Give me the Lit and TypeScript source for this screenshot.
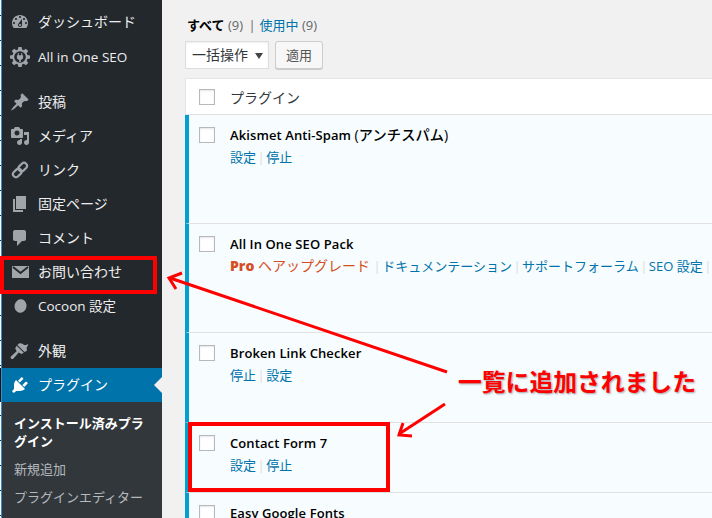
import { LitElement, html, css, svg } from "lit";
import { customElement } from "lit/decorators.js";

const ICONS: Record<string, unknown> = {
  dash: svg`<path d="M3.76 16h12.48c1.1-1.37 1.76-3.11 1.76-5 0-4.42-3.58-8-8-8s-8 3.58-8 8c0 1.89.66 3.63 1.76 5zM10 4c.55 0 1 .45 1 1s-.45 1-1 1-1-.45-1-1 .45-1 1-1zM6 6c.55 0 1 .45 1 1s-.45 1-1 1-1-.45-1-1 .45-1 1-1zm8 0c.55 0 1 .45 1 1s-.45 1-1 1-1-.45-1-1 .45-1 1-1zm-5.37 5.55L12 7v6c0 1.1-.9 2-2 2s-2-.9-2-2c0-.57.24-1.08.63-1.45zM4 10c.55 0 1 .45 1 1s-.45 1-1 1-1-.45-1-1 .45-1 1-1zm12 0c.55 0 1 .45 1 1s-.45 1-1 1-1-.45-1-1 .45-1 1-1zm-5 3c0-.55-.45-1-1-1s-1 .45-1 1 .45 1 1 1 1-.45 1-1z"/>`,
  seo: svg`<path d="M8.4 0h3.2l.5 2.6 1.6.7 2.2-1.500 2.300 2.300-1.500 2.200.7 1.600 2.600.5v3.200l-2.600.5-.7 1.600 1.500 2.200-2.300 2.300-2.200-1.500-1.600.7-.5 2.600H8.400l-.5-2.600-1.600-.7-2.200 1.500-2.300-2.300 1.500-2.200-.7-1.600L0 11.600V8.400l2.600-.5.7-1.600-1.500-2.200 2.300-2.300 2.200 1.500 1.600-.7z"/><circle cx="10" cy="10" r="5.800" fill="#23282d"/><path d="M7.800 6v2.200h-.9v2.300c0 1.300.9 2.200 2.300 2.400V15h1.600v-2.100c1.400-.2 2.300-1.100 2.300-2.400V8.200h-.9V6h-1v2.200H8.800V6z"/>`,
  pin: svg`<path d="M10.44 3.02l1.82-1.82 6.36 6.35-1.83 1.82c-1.05-.68-2.48-.57-3.41.36l-.75.75c-.92.93-1.04 2.35-.35 3.41l-1.83 1.82-2.41-2.41-2.8 2.79c-.42.42-3.38 2.71-3.8 2.29s1.86-3.39 2.28-3.81l2.79-2.79L4.1 9.36l1.83-1.82c1.05.69 2.48.57 3.4-.36l.75-.75c.93-.92 1.05-2.35.36-3.41z"/>`,
  media: svg`<path d="M13 11V4c0-.55-.45-1-1-1h-1.670L9 1H5L3.670 3H2c-.55 0-1 .45-1 1v7c0 .55.45 1 1 1h10c.55 0 1-.45 1-1zM7 4.500c1.380 0 2.500 1.120 2.500 2.500S8.380 9.500 7 9.500 4.500 8.380 4.500 7 5.620 4.500 7 4.500zM14 6h5v10.500c0 1.380-1.120 2.500-2.500 2.500S14 17.880 14 16.500s1.120-2.500 2.500-2.500c.170 0 .340.020.5.050V9h-3V6zm-4 8.050V13h2v3.500c0 1.380-1.120 2.500-2.500 2.500S7 17.880 7 16.500 8.120 14 9.500 14c.170 0 .340.020.5.050z"/>`,
  link: svg`<g fill="none" stroke="currentColor" stroke-width="2.200"><rect x="2.500" y="10" width="9.500" height="6" rx="3" transform="rotate(-45 7.200 13)"/><rect x="8" y="4" width="9.500" height="6" rx="3" transform="rotate(-45 12.800 7)"/></g>`,
  page: svg`<path d="M6 15V2h10v13H6zm-1 1h8v2H3V5h2v11z"/>`,
  comment: svg`<path d="M5 2h9c1.100 0 2 .9 2 2v7c0 1.100-.9 2-2 2h-2l-5 5v-5H5c-1.100 0-2-.9-2-2V4c0-1.100.9-2 2-2z"/>`,
  mail: svg`<rect x="2" y="4" width="17" height="12"/><path d="M3 5l7.500 6L18 5" fill="none" stroke="#23282d" stroke-width="1.800"/>`,
  circle: svg`<ellipse cx="10.500" cy="10" rx="6" ry="6.800" transform="rotate(12 10.500 10)"/>`,
  brush: svg`<path d="M14.480 11.060L7.410 3.990l1.500-1.500c.5-.56 2.300-.47 3.510.32 1.210.8 1.430 1.280 2.660 1.280 1.230 0 2.200-.4 2.600-.8.400-.4.700.2.400.8l-1.200 2.100c-.5.900-.2 1.700.1 2.300.3.600-.1 1-.5 1.400z"/><path d="M6.700 4.700l7.100 7.100-2.300 1.200-2.800-1.400L3.500 17.500c-1 .9-2 .6-2.500 0-.5-.6-.6-1.500.2-2.300l5.400-5-1.400-2.900z"/>`,
  plug: svg`<path d="M13.110 4.360L9.870 7.600 8 5.730l3.240-3.240c.35-.34 1.050-.2 1.560.32.520.51.660 1.210.310 1.550zm-8 1.770l.91-1.120 9.010 9.010-1.190.84c-.71.710-2.630 1.160-3.820 1.160H6.140L4.900 17.260c-.59.590-1.540.590-2.120 0-.59-.58-.59-1.530 0-2.120l1.240-1.240v-3.880c0-1.130.38-3.060 1.090-3.890zm7.260 3.970l3.240-3.240c.34-.35 1.040-.21 1.550.31.520.51.660 1.210.31 1.550l-3.240 3.250z"/>`,
};

type Menu = { icon: string; label: string; cls?: string };
const MENU: Menu[] = [
  { icon: "dash", label: "ダッシュボード", cls: "first" },
  { icon: "seo", label: "All in One SEO", cls: "tight small" },
  { icon: "pin", label: "投稿", cls: "sep" },
  { icon: "media", label: "メディア" },
  { icon: "link", label: "リンク" },
  { icon: "page", label: "固定ページ" },
  { icon: "comment", label: "コメント" },
  { icon: "mail", label: "お問い合わせ" },
  { icon: "circle", label: "Cocoon 設定", cls: "small" },
  { icon: "brush", label: "外観", cls: "sep" },
  { icon: "plug", label: "プラグイン", cls: "current" },
];

type Act = { t: string; pro?: boolean };
type Row = { name: string; ja?: string; h: number; acts: Act[]; trail?: boolean };
const ROWS: Row[] = [
  { name: "Akismet Anti-Spam ", ja: "(アンチスパム)", h: 109, acts: [{ t: "設定" }, { t: "停止" }] },
  {
    name: "All In One SEO Pack",
    h: 109,
    trail: true,
    acts: [{ t: "Pro ヘアップグレード", pro: true }, { t: "ドキュメンテーション" }, { t: "サポートフォーラム" }, { t: "SEO 設定" }],
  },
  { name: "Broken Link Checker", h: 90, acts: [{ t: "停止" }, { t: "設定" }] },
  { name: "Contact Form 7", h: 70, acts: [{ t: "設定" }, { t: "停止" }] },
  { name: "Easy Google Fonts", h: 60, acts: [] },
];

@customElement("app-root")
export class AppRoot extends LitElement {
  static styles = css`
    :host {
      display: flex;
      position: relative;
      width: 712px;
      height: 518px;
      overflow: hidden;
      background: #f1f1f1;
      font-family: "Open Sans", "Noto Sans CJK JP", sans-serif;
      font-size: 13px;
      color: #444;
    }
    .strip {
      width: 2px;
      flex: none;
      background:
        linear-gradient(90deg, #111 1px, transparent 1px) 0 368px / 2px 34px no-repeat,
        linear-gradient(90deg, #3a8ccb 0 2px) 1px 0 / 1px 100% no-repeat,
        repeating-linear-gradient(180deg, #fff 0 24px, #222 24px 25px) 0 -9px / 1px 600px no-repeat;
    }
    .side {
      width: 160px;
      flex: none;
      background: #23282d;
      color: #eee;
      padding-top: 5px;
      box-sizing: border-box;
    }
    .item {
      display: flex;
      align-items: center;
      height: 34px;
      position: relative;
      line-height: 18px;
      font-size: 14px;
      white-space: nowrap;
    }
    .item.tight { margin-top: 1px; }
    .item.small span { font-size: 13.500px; }
    .item.sep { margin-top: 11px; }
    .item svg {
      width: 20px;
      height: 20px;
      margin-left: 8px;
      margin-right: 8px;
      fill: #a0a5aa;
      color: #a0a5aa;
      flex: none;
    }
    .item.current { background: #0073aa; color: #fff; }
    .item.current svg { fill: #fff; }
    .item.current::after {
      content: "";
      position: absolute;
      right: 0;
      top: 9px;
      border: 8px solid transparent;
      border-right-color: #f1f1f1;
      border-left-width: 0;
    }
    .sub {
      background: #32373c;
      padding: 12px 12px 0;
      color: #b4b9be;
      line-height: 18px;
      height: 116px;
    }
    .sub div { margin-bottom: 10px; }
    .sub .on { color: #fff; font-weight: 700; }
    .main {
      flex: 1;
      min-width: 0;
      padding: 16px 0 0 23px;
    }
    .filters {
      height: 18px;
      line-height: 18px;
      margin-left: 2px;
      color: #666;
      white-space: nowrap;
    }
    .filters b { color: #000; font-weight: 700; }
    .filters a { color: #0073aa; }
    .filters .bar { margin: 0 4px 0 2px; }
    .bulk {
      display: flex;
      gap: 6px;
      margin-top: 7px;
      height: 28px;
    }
    .select {
      width: 84px;
      box-sizing: border-box;
      background: #fff;
      border: 1px solid #ddd;
      box-shadow: inset 0 1px 2px rgba(0, 0, 0, 0.07);
      padding-left: 6px;
      font-size: 14px;
      line-height: 26px;
      color: #32373c;
      position: relative;
    }
    .select::after {
      content: "";
      position: absolute;
      right: 5px;
      top: 11px;
      border: 4px solid transparent;
      border-top: 6px solid #444;
      border-bottom: 0;
    }
    .btn {
      width: 48px;
      box-sizing: border-box;
      background: #f7f7f7;
      border: 1px solid #ccc;
      border-radius: 3px;
      box-shadow: 0 1px 0 #ccc;
      color: #555;
      text-align: center;
      line-height: 26px;
    }
    .table {
      margin-top: 9px;
      border-top: 1px solid #e5e5e5;
      border-left: 1px solid #e5e5e5;
      width: 600px;
    }
    .check {
      width: 16px;
      height: 16px;
      box-sizing: border-box;
      background: #fff;
      border: 1px solid #b4b9be;
      box-shadow: inset 0 1px 2px rgba(0, 0, 0, 0.1);
      flex: none;
    }
    .head {
      display: flex;
      align-items: center;
      height: 35px;
      background: #fff;
      border-bottom: 1px solid #e1e1e1;
      padding-left: 13px;
      gap: 15px;
      font-size: 14px;
      color: #32373c;
    }
    .row {
      display: flex;
      gap: 15px;
      box-sizing: border-box;
      background: #f7fcfe;
      border-left: 4px solid #00a0d2;
      margin-left: -1px;
      padding: 12px 0 0 10px;
      border-bottom: 1px solid #e1e1e1;
    }
    .name {
      color: #000;
      font-weight: 600;
      letter-spacing: 0.1px;
      line-height: 16px;
      white-space: nowrap;
    }
    .name span { font-size: 14.200px; font-weight: 500; }
    .acts {
      margin-top: 5px;
      line-height: 18px;
      color: #0073aa;
      white-space: nowrap;
    }
    .acts .pro { color: #d54e21; font-size: 14px; margin-right: 2px; }
    .acts .pro b { font-weight: 800; }
    .acts i { font-style: normal; color: #ddd; margin: 0 1.500px; font-size: 13px; }
    .over { position: absolute; left: 0; top: 0; width: 712px; height: 518px; pointer-events: none; }
    .note {
      position: absolute;
      left: 458px;
      top: 366px;
      font-size: 23.800px;
      line-height: 30px;
      font-weight: 700;
      color: #f00;
      white-space: nowrap;
      font-family: "Noto Sans CJK JP", sans-serif;
      text-shadow: 1px 1px 2px rgba(90, 90, 90, 0.55);
    }
  `;

  private act(a: Act) {
    if (a.pro) {
      const [p, rest] = a.t.split(" ");
      return html`<span class="pro"><b>${p}</b> ${rest}</span>`;
    }
    return html`<span>${a.t}</span>`;
  }

  render() {
    return html`
      <div class="strip"></div>
      <nav class="side">
        ${MENU.map(
          (m) => html`<div class="item ${m.cls ?? ""}">
            <svg viewBox="0 0 20 20">${ICONS[m.icon]}</svg><span>${m.label}</span>
          </div>`
        )}
        <div class="sub">
          <div class="on">インストール済みプラグイン</div>
          <div>新規追加</div>
          <div>プラグインエディター</div>
        </div>
      </nav>
      <main class="main">
        <div class="filters"><b>すべて</b> (9) <span class="bar">|</span><a>使用中</a> (9)</div>
        <div class="bulk">
          <div class="select">一括操作</div>
          <div class="btn">適用</div>
        </div>
        <div class="table">
          <div class="head"><span class="check"></span><span>プラグイン</span></div>
          ${ROWS.map(
            (r) => html`<div class="row" style="height:${r.h}px">
              <span class="check"></span>
              <div>
                <div class="name">${r.name}${r.ja ? html`<span>${r.ja}</span>` : ""}</div>
                <div class="acts">
                  ${r.acts.map(
                    (a, i) => html`${i ? html`<i>|</i>` : ""}${this.act(a)}`
                  )}${r.trail ? html`<i>|</i>` : ""}
                </div>
              </div>
            </div>`
          )}
        </div>
      </main>
      <svg class="over" viewBox="0 0 712 518">
        <g fill="none" stroke="#f00">
          <rect x="2" y="258" width="153" height="34" stroke-width="4" />
          <rect x="190" y="424" width="198" height="66" stroke-width="4" />
          <g stroke-width="3">
            <path d="M447 372L170 278" />
            <path d="M182 273L169 278L176 289" />
            <path d="M445 404L399 434" />
            <path d="M403 423L399 435L412 436" />
          </g>
        </g>
      </svg>
      <div class="note">一覧に追加されました</div>
    `;
  }
}
